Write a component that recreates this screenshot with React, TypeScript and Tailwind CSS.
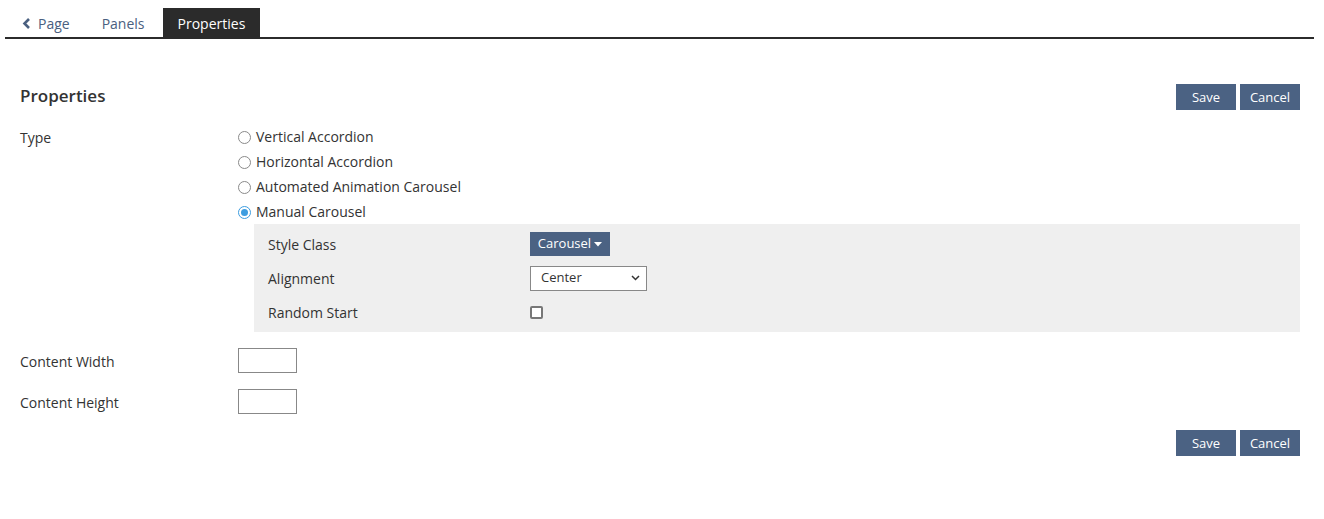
import React from 'react';

const font = { fontFamily: '"Open Sans", "Liberation Sans", sans-serif' };

const Btn: React.FC<{ children: React.ReactNode }> = ({ children }) => (
  <button className="h-[26px] w-[60px] bg-[#4b6283] text-white text-[13px] leading-none">{children}</button>
);

const Radio: React.FC<{ label: string; checked?: boolean }> = ({ label, checked }) => (
  <div className="flex h-[25px] items-center">
    <span
      className={`mt-[2px] flex h-[13px] w-[13px] items-center justify-center rounded-full border-[1.5px] ${
        checked ? 'border-[#3d9de0]' : 'border-[#8a8a8a]'
      }`}
    >
      {checked && <span className="h-[7px] w-[7px] rounded-full bg-[#3d9de0]" />}
    </span>
    <span className="ml-[5px] text-[14px] text-[#333]">{label}</span>
  </div>
);

const App: React.FC = () => {
  return (
    <div className="min-h-[519px] bg-white text-[#333]" style={font}>
      <div className="ml-[5px] mr-[10px] mt-2 flex h-[31px] border-b-2 border-[#2b2b2b] text-[14px]">
        <a className="ml-[2px] flex items-center pl-[15px] pr-[17px] pt-[2px] text-[#4a6080]">
          <svg width="9" height="11" viewBox="0 0 9 11" className="mr-[7px]">
            <path d="M7 1 L2.5 5.5 L7 10" fill="none" stroke="#4a6080" strokeWidth="2.6" />
          </svg>
          Page
        </a>
        <a className="flex items-center px-[15px] pt-[2px] text-[#4a6080]">Panels</a>
        <a className="ml-[3px] flex items-center bg-[#2b2b2b] px-[15px] pt-[2px] text-white">Properties</a>
      </div>

      <div className="px-5">
        <div className="mt-[45px] flex items-center justify-between pr-[4px]">
          <h2 className="-mt-[2px] text-[17px] font-semibold text-[#333]">Properties</h2>
          <div className="flex gap-1">
            <Btn>Save</Btn>
            <Btn>Cancel</Btn>
          </div>
        </div>

        <div className="mt-[15px] flex">
          <div className="w-[218px] text-[14px] leading-[25px]">Type</div>
          <div className="-mt-[1px]">
            <Radio label="Vertical Accordion" />
            <Radio label="Horizontal Accordion" />
            <Radio label="Automated Animation Carousel" />
            <Radio label="Manual Carousel" checked />
          </div>
        </div>

        <div className="ml-[234px] mr-[4px] bg-[#efefef] pb-[3px] pt-[3px] text-[14px]">
          <div className="flex h-[34px] items-center">
            <div className="ml-[14px] w-[262px]">Style Class</div>
            <button className="flex h-[24px] w-[80px] items-center justify-center bg-[#4b6283] text-[13px] text-white">
              Carousel
              <svg width="8" height="5" viewBox="0 0 8 5" className="ml-[3px] mt-[1px]">
                <path d="M0 0 L8 0 L4 4.5 Z" fill="white" />
              </svg>
            </button>
          </div>
          <div className="flex h-[34px] items-center">
            <div className="ml-[14px] w-[262px]">Alignment</div>
            <div className="flex h-[25px] w-[117px] items-center justify-between border border-[#888] bg-white pl-[10px] pr-[6px] text-[13px]">
              <span>Center</span>
              <svg width="9" height="6" viewBox="0 0 9 6">
                <path d="M1 1 L4.5 4.5 L8 1" fill="none" stroke="#333" strokeWidth="1.5" />
              </svg>
            </div>
          </div>
          <div className="flex h-[34px] items-center">
            <div className="ml-[14px] w-[262px]">Random Start</div>
            <span className="h-[13px] w-[13px] rounded-[2px] border-2 border-[#777] bg-white" />
          </div>
        </div>

        <div className="mt-4 flex items-center text-[14px]">
          <div className="w-[218px] pt-[1px]">Content Width</div>
          <div className="h-[25px] w-[59px] border border-[#888]" />
        </div>
        <div className="mt-4 flex items-center text-[14px]">
          <div className="w-[218px] pt-[1px]">Content Height</div>
          <div className="h-[25px] w-[59px] border border-[#888]" />
        </div>

        <div className="mt-4 flex justify-end gap-1 pr-[4px]">
          <Btn>Save</Btn>
          <Btn>Cancel</Btn>
        </div>
      </div>
    </div>
  );
};

export default App;
